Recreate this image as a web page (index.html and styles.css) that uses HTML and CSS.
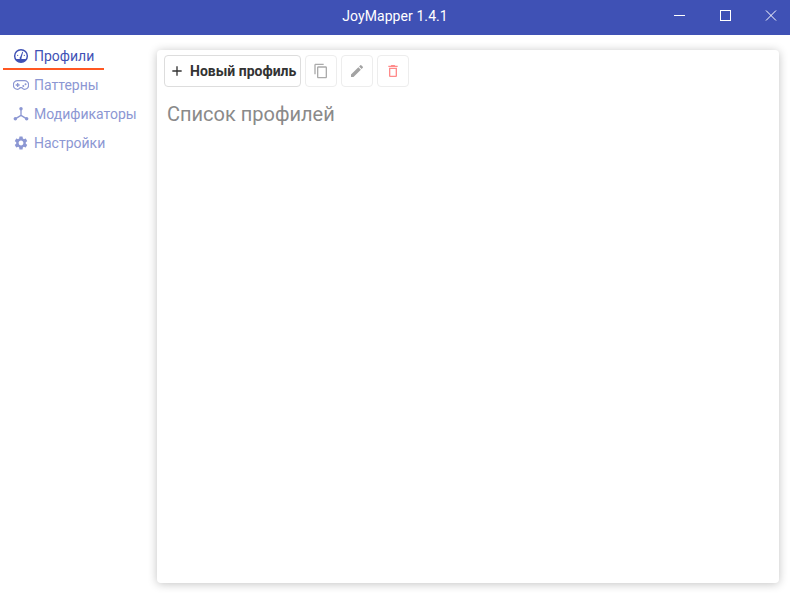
FILE: index.html
```html
<!DOCTYPE html>
<html lang="ru">
<head>
<meta charset="utf-8">
<title>JoyMapper 1.4.1</title>
<link rel="stylesheet" href="styles.css">
</head>
<body>
<div class="app">
  <header class="titlebar">
    <span class="title">JoyMapper 1.4.1</span>
    <div class="winctl">
      <span class="winbtn winbtn-min"><svg width="12" height="12" viewBox="0 0 12 12"><path d="M1 6.500h11" stroke="#fff" fill="none"/></svg></span>
      <span class="winbtn"><svg width="12" height="12" viewBox="0 0 12 12"><rect x=".5" y="1.500" width="10" height="10" stroke="#fff" fill="none"/></svg></span>
      <span class="winbtn"><svg width="12" height="12" viewBox="0 0 12 12"><path d="M1 1.500l10 10M11 1.500L1 11.500" stroke="#fff" fill="none"/></svg></span>
    </div>
  </header>
  <div class="main">
    <nav class="side">
      <a class="nav active">
        <svg class="nav-ico" viewBox="0 0 24 24"><circle cx="12" cy="12" r="9.500" fill="none" stroke="currentColor" stroke-width="2.200"/><path d="M4 16.500h16A9.500 9.500 0 0 1 12 21.500a9.500 9.500 0 0 1-8-5z" fill="currentColor"/><path d="M10.800 13.500l3.200-8 1.200.5-2.300 8.200a1.600 1.600 0 1 1-2.100-.7z" fill="currentColor"/><circle cx="7" cy="11" r="1" fill="currentColor"/><circle cx="17" cy="11" r="1" fill="currentColor"/></svg>
        <span>Профили</span>
      </a>
      <a class="nav">
        <svg class="nav-ico" viewBox="0 0 24 24"><path d="M7 5.500h10a6.200 6.200 0 0 1 0 13c-2 0-2.700-1.500-3.700-2.500h-2.600c-1 1-1.700 2.500-3.700 2.500a6.200 6.200 0 0 1 0-13z" fill="none" stroke="currentColor" stroke-width="2"/><path d="M7 9v6M4 12h6" stroke="currentColor" stroke-width="2" fill="none"/><circle cx="15.500" cy="13.500" r="1.500" fill="currentColor"/><circle cx="18.800" cy="10.800" r="1.500" fill="currentColor"/></svg>
        <span>Паттерны</span>
      </a>
      <a class="nav">
        <svg class="nav-ico" viewBox="0 0 24 24"><path d="M12 4v10M12 14l-8 5M12 14l8 5" stroke="currentColor" stroke-width="2" fill="none"/><circle cx="12" cy="4" r="2.600" fill="currentColor"/><circle cx="3.500" cy="19" r="2.600" fill="currentColor"/><circle cx="20.500" cy="19" r="2.600" fill="currentColor"/></svg>
        <span>Модификаторы</span>
      </a>
      <a class="nav">
        <svg class="nav-ico" viewBox="0 0 24 24"><path fill="currentColor" d="M19.140 12.940c.04-.3.060-.61.060-.94 0-.32-.02-.64-.07-.94l2.030-1.580a.49.49 0 0 0 .12-.61l-1.920-3.320a.488.488 0 0 0-.59-.22l-2.390.96c-.5-.38-1.030-.7-1.620-.94l-.36-2.540a.484.484 0 0 0-.48-.41h-3.840c-.24 0-.43.170-.47.410l-.36 2.540c-.59.240-1.130.570-1.620.94l-2.390-.96c-.22-.08-.47 0-.59.220L2.740 8.870c-.12.210-.08.470.12.610l2.030 1.580c-.05.300-.09.630-.09.940s.02.640.07.940l-2.030 1.580a.49.49 0 0 0-.12.610l1.920 3.320c.12.220.37.290.59.220l2.390-.96c.5.380 1.030.7 1.620.94l.36 2.540c.05.240.24.410.48.410h3.840c.24 0 .44-.170.47-.410l.36-2.540c.59-.240 1.130-.560 1.620-.94l2.390.96c.22.080.47 0 .59-.22l1.920-3.320c.12-.22.070-.47-.12-.61l-2.010-1.580zM12 15.600A3.610 3.610 0 0 1 8.400 12c0-1.980 1.620-3.600 3.600-3.600s3.600 1.620 3.600 3.600-1.620 3.600-3.600 3.600z"/></svg>
        <span>Настройки</span>
      </a>
    </nav>
    <section class="card">
      <div class="toolbar">
        <button class="btn btn-new">
          <svg class="btn-ico-plus" viewBox="0 0 24 24"><path fill="#333" d="M19 13h-6v6h-2v-6H5v-2h6V5h2v6h6v2z"/></svg>
          <span>Новый профиль</span>
        </button>
        <button class="btn btn-icon">
          <svg class="btn-ico" viewBox="0 0 24 24"><path fill="#ababab" d="M16 1H4c-1.100 0-2 .9-2 2v14h2V3h12V1zm3 4H8c-1.100 0-2 .9-2 2v14c0 1.100.9 2 2 2h11c1.100 0 2-.9 2-2V7c0-1.100-.9-2-2-2zm0 16H8V7h11v14z"/></svg>
        </button>
        <button class="btn btn-icon">
          <svg class="btn-ico" viewBox="0 0 24 24"><path fill="#a3a3a3" d="M3 17.250V21h3.750L17.810 9.940l-3.750-3.750L3 17.250zM20.710 7.040a.996.996 0 0 0 0-1.410l-2.340-2.340a.996.996 0 0 0-1.410 0l-1.830 1.830 3.750 3.750 1.830-1.830z"/></svg>
        </button>
        <button class="btn btn-icon">
          <svg class="btn-ico" viewBox="0 0 24 24"><path fill="#ff8a8a" d="M16 9v10H8V9h8m-1.500-6h-5l-1 1H5v2h14V4h-3.500l-1-1zM18 7H6v12c0 1.100.9 2 2 2h8c1.100 0 2-.9 2-2V7z"/></svg>
        </button>
      </div>
      <h2 class="heading">Список профилей</h2>
    </section>
  </div>
</div>
</body>
</html>
```

FILE: styles.css
```css
* { box-sizing: border-box; }
html, body { margin: 0; height: 100%; overflow: hidden; background: #fff; font-family: Roboto, "Liberation Sans", sans-serif; }
.app { display: flex; flex-direction: column; height: 598px; }
.titlebar { position: relative; height: 35px; background: #3f51b5; color: #fff; display: flex; align-items: center; justify-content: center; flex: none; }
.title { font-size: 14px; line-height: 35px; letter-spacing: .08px; position: relative; top: -1px; }
.winctl { position: absolute; right: 0; top: 0; display: flex; gap: 7px; height: 30px; }
.winbtn { width: 38px; height: 30px; display: flex; align-items: center; justify-content: center; }
.winbtn-min { margin-right: 2px; }
.main { flex: 1; display: flex; min-height: 0; }
.side { width: 157px; flex: none; padding-top: 7px; padding-left: 3px; display: flex; flex-direction: column; }
.nav { display: flex; align-items: center; width: 101px; height: 29px; white-space: nowrap; padding-left: 10px; gap: 5px; font-size: 14px; letter-spacing: 0; color: #8c97d3; }
.nav.active { color: #3f51b5; border-bottom: 2px solid #ff5722; height: 28px; padding-top: 1px; }
.nav-ico { width: 16px; height: 16px; flex: none; }
.card { width: 622px; height: 533px; margin-top: 15px; background: #fff; border-radius: 4px; padding: 5px 7px; box-shadow: 0 1px 10px rgba(0,0,0,.24); }
.toolbar { display: flex; gap: 4px; }
.btn { height: 32px; background: #fff; border: 1px solid #ededed; border-radius: 4px; padding: 0; display: flex; align-items: center; font-family: inherit; }
.btn-new { width: 137px; border-color: #ddd; padding-left: 4px; gap: 5px; font-size: 14px; font-weight: 700; color: #333; white-space: nowrap; }
.btn-ico-plus { width: 16px; height: 16px; flex: none; }
.btn-icon { width: 32px; justify-content: center; }
.btn-ico { width: 16px; height: 16px; }
.heading { margin: 15px 0 0 3px; font-size: 20px; line-height: 24px; font-weight: 400; color: #8a8a8a; }
```
